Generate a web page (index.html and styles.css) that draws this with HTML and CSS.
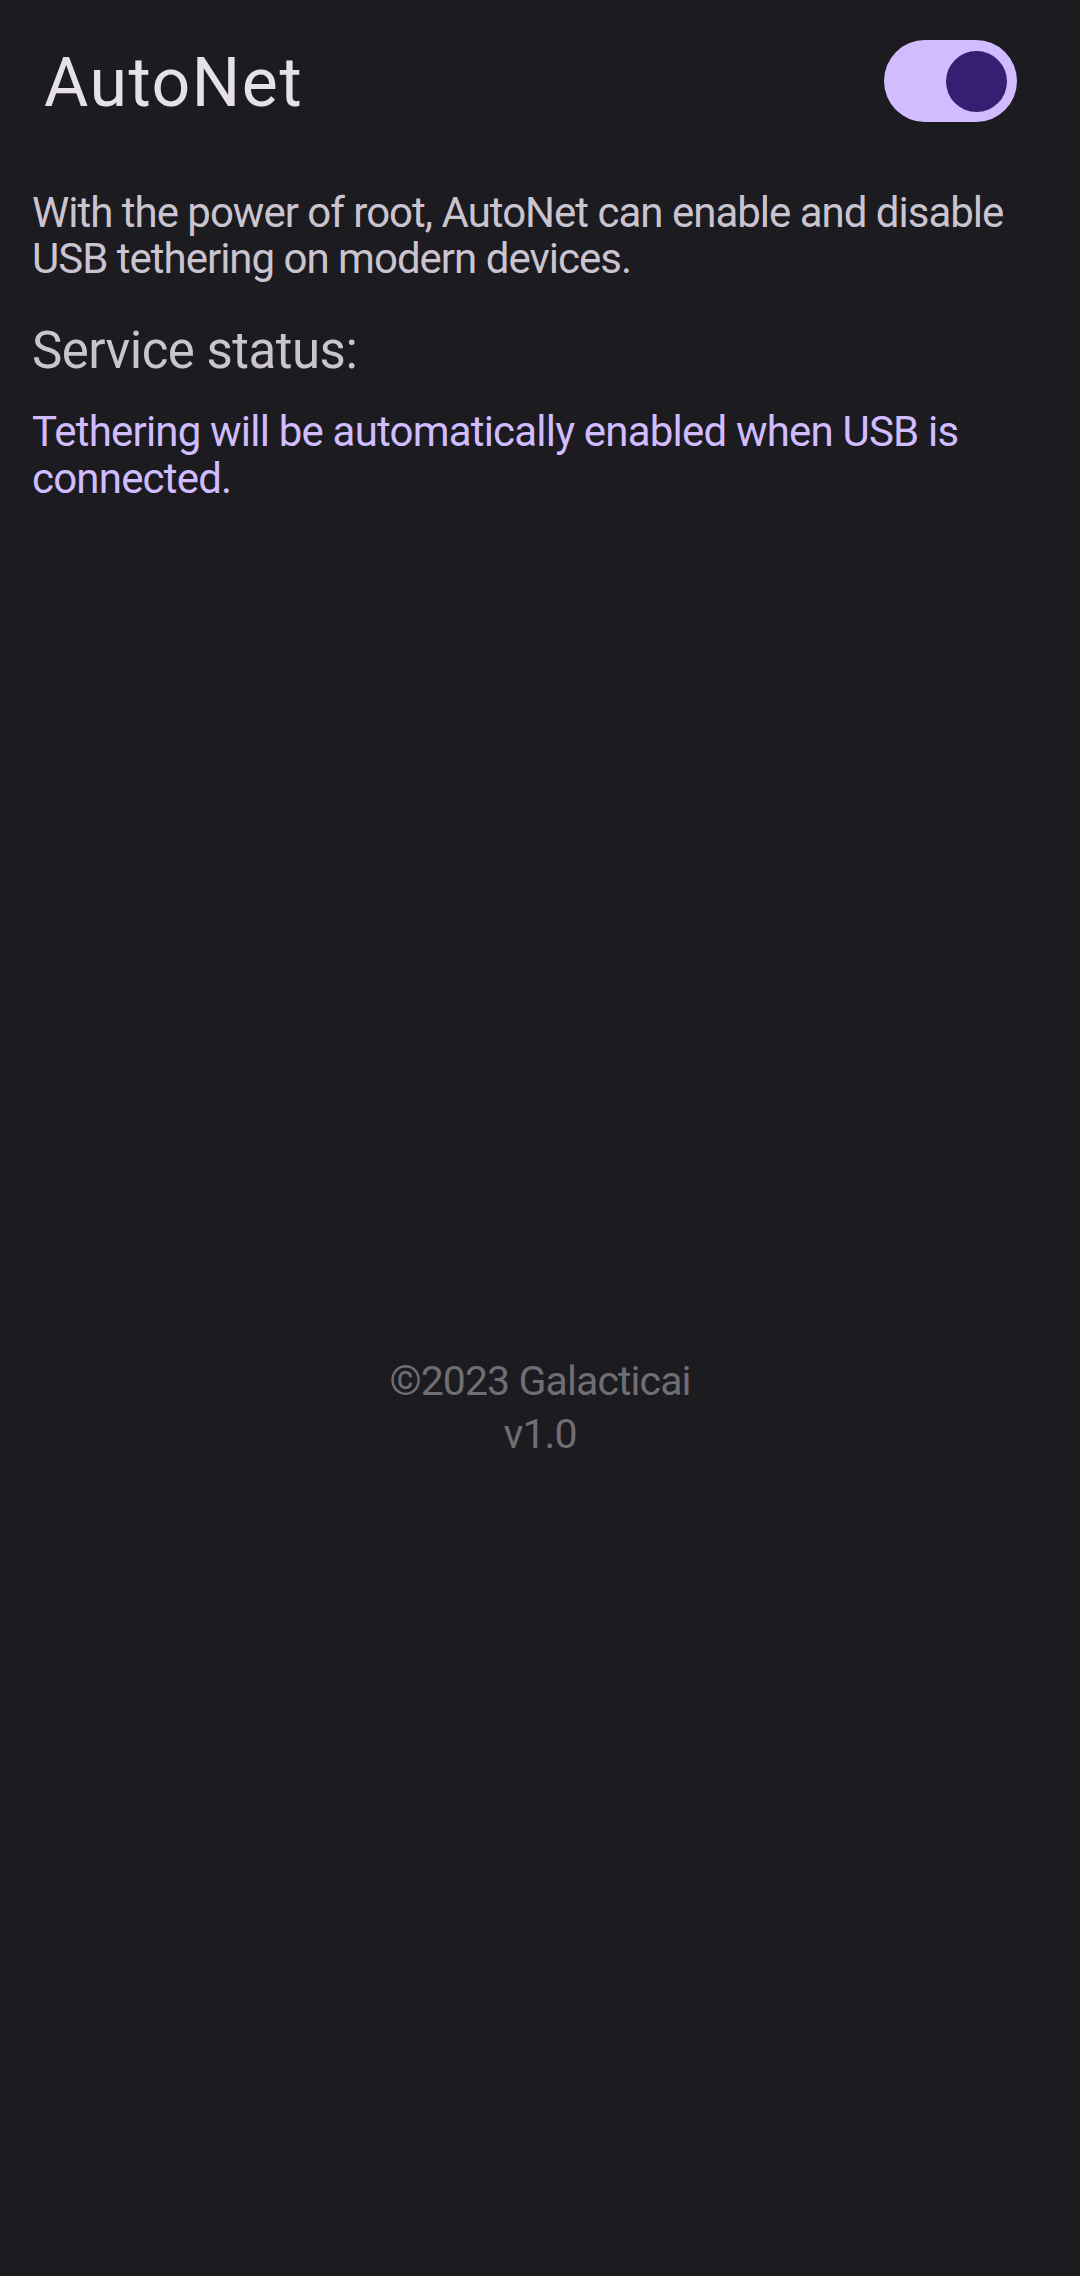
FILE: index.html
```html
<!DOCTYPE html>
<html lang="en">
<head>
<meta charset="utf-8">
<title>AutoNet</title>
<link rel="stylesheet" href="styles.css">
</head>
<body>
<div class="app">
  <header class="top-bar">
    <h1 class="title">AutoNet</h1>
    <div class="switch" role="switch" aria-checked="true">
      <span class="thumb"></span>
    </div>
  </header>
  <main class="content">
    <p class="description">With the power of root, AutoNet can enable and disable USB tethering on modern devices.</p>
    <h2 class="status-label">Service status:</h2>
    <p class="status-text">Tethering will be automatically enabled when USB is connected.</p>
  </main>
  <footer class="footer">
    <div>©2023 Galacticai</div>
    <div>v1.0</div>
  </footer>
</div>
</body>
</html>
```

FILE: styles.css
```css
html, body {
  margin: 0;
  padding: 0;
  background: #1c1b1f;
}
body {
  font-family: Roboto, "Noto Sans", sans-serif;
  width: 1080px;
  min-height: 2276px;
}
.app {
  display: flex;
  flex-direction: column;
}
.top-bar {
  display: flex;
  align-items: flex-start;
  justify-content: space-between;
  padding: 40px 63px 0 44px;
}
.title {
  margin: 3px 0 0 0;
  font-size: 68px;
  line-height: 80px;
  font-weight: 400;
  letter-spacing: 1.5px;
  color: #e6e1e5;
}
.switch {
  width: 133px;
  height: 82px;
  border-radius: 41px;
  background: #d0bcff;
  display: flex;
  align-items: center;
  justify-content: flex-end;
  padding-right: 10px;
  box-sizing: border-box;
}
.thumb {
  width: 61px;
  height: 61px;
  border-radius: 50%;
  background: #381e72;
}
.content {
  padding: 0 32px;
}
.description {
  margin: 67px 0 0 0;
  font-size: 42px;
  line-height: 46px;
  letter-spacing: -1px;
  color: #cac4d0;
}
.status-label {
  margin: 39px 0 0 0;
  font-size: 51px;
  line-height: 60px;
  font-weight: 400;
  letter-spacing: -0.5px;
  color: #cac4d0;
}
.status-text {
  margin: 27px 0 0 0;
  font-size: 42px;
  line-height: 47px;
  letter-spacing: -0.8px;
  color: #d0bcff;
}
.footer {
  margin-top: 853px;
  text-align: center;
  font-size: 41px;
  line-height: 53px;
  letter-spacing: -0.9px;
  color: #706d74;
}
```
